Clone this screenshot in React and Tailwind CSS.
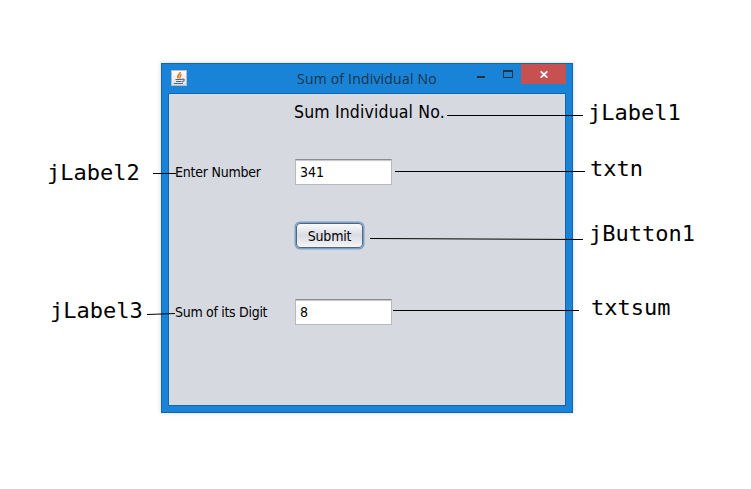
import React from "react";

const noteFont = "font-['DejaVu_Sans_Mono',monospace] text-[22px] leading-[26px] whitespace-pre text-black";
const uiFont = "font-['DejaVu_Sans_Condensed','DejaVu_Sans',sans-serif] [font-stretch:condensed] text-black whitespace-nowrap";

function JavaIcon() {
  return (
    <svg width="16" height="16" viewBox="0 0 16 16" className="block">
      <defs>
        <linearGradient id="tile" x1="0" y1="0" x2="0" y2="1">
          <stop offset="0" stopColor="#fff" />
          <stop offset="1" stopColor="#dedede" />
        </linearGradient>
      </defs>
      <rect x="0.5" y="0.5" width="15" height="15" fill="url(#tile)" stroke="#b9bcc0" />
      <path d="M9.2 2C9.4 4 5.2 5.2 7.2 8.4M10.6 4.5C8 5.6 9.9 6.9 8.6 8.4" fill="none" stroke="#e8731c" strokeWidth="1.5" />
      <path d="M4.5 9.5h6.5M5 11.5h5.5M3 13.5h9M11 9.3c3.2-.8 2.8 2 0 2.4" fill="none" stroke="#456b8a" strokeWidth="1.1" />
    </svg>
  );
}

function Field({ value }) {
  return (
    <div className={`${uiFont} flex h-[26px] w-[97px] items-center border border-t-[#8b8c90] border-x-[#b8b9bd] border-b-[#b8b9bd] bg-white pl-1 text-sm shadow-[inset_0_2px_1px_-1px_#c4c5c8]`}>
      {value}
    </div>
  );
}

function TitleBar() {
  return (
    <div className="flex h-[29px] items-start">
      <div className="ml-[9px] mt-1.5"><JavaIcon /></div>
      <div className="ml-[110px] mt-[5px] w-[142px] whitespace-nowrap font-['Open_Sans',sans-serif] text-[14px] leading-5 tracking-[0.2px] text-[#1d3345]">Sum of Individual No</div>
      <div className="ml-[38px] mt-3 h-0.5 w-2 bg-[#26303b]" />
      <div className="ml-[18px] mt-1.5 h-2 w-2.5 border border-t-2 border-[#26303b]" />
      <div className="ml-2 flex h-5 w-[45px] items-center justify-center bg-[#c75050]">
        <svg width="8" height="7" viewBox="0 0 8 7"><path d="M.7.3l6.6 6.4M7.3.3L.7 6.7" stroke="white" strokeWidth="1.7" /></svg>
      </div>
    </div>
  );
}

function Window() {
  return (
    <div className="mt-[63px] flex h-[350px] w-[412px] flex-col border border-[#1065ac] bg-[#1883d7] px-1.5 pb-1.5 shadow-[0_0_4px_#00000030]">
      <div className="-mx-1.5"><TitleBar /></div>
      <div className="h-[313px] border border-[#1065ac] bg-[#d6d9e0] pl-1.5">
        <div className={`${uiFont} ml-[119px] mt-2 text-[17.5px] leading-5 tracking-[0.15px]`}>Sum Individual No.</div>
        <div className="mt-[37px] flex h-[26px] items-center">
          <div className={`${uiFont} w-[120px] text-sm tracking-[-0.22px]`}>Enter Number</div>
          <Field value="341" />
        </div>
        <div className="ml-[121px] mt-[38px] flex">
          <button className={`${uiFont} h-[25px] w-[67px] rounded-[4px] border border-[#5c6470] bg-linear-to-b from-[#fafafb] via-[#d9dce3] to-[#f4f5f8] text-sm tracking-[-0.2px] shadow-[0_0_0_1.5px_#73a4d1]`}>Submit</button>
        </div>
        <div className="mt-[51px] flex h-[26px] items-center">
          <div className={`${uiFont} w-[120px] text-sm tracking-[-0.3px]`}>Sum of its Digit</div>
          <Field value="8" />
        </div>
      </div>
    </div>
  );
}

export default function App() {
  return (
    <div className="relative flex h-[489px] w-[751px] overflow-hidden bg-white">
      <div className="w-[161px] shrink-0 pt-40">
        <div className={`${noteFont} ml-[47px]`}>jLabel2</div>
        <div className={`${noteFont} ml-[50px] mt-[112px]`}>jLabel3</div>
      </div>
      <Window />
      <div className="pt-[100px]">
        <div className={`${noteFont} ml-[15px]`}>jLabel1</div>
        <div className={`${noteFont} ml-[17px] mt-[30px]`}>txtn</div>
        <div className={`${noteFont} ml-4 mt-[39px]`}>jButton1</div>
        <div className={`${noteFont} ml-[18px] mt-12`}>txtsum</div>
      </div>
      <svg className="pointer-events-none absolute inset-0" width="751" height="489" fill="none" stroke="black">
        <path d="M447 115.5H583M395 171.5H585M393 310.5H579M153 173.5H176M147 314.5L175 313.5M370 238.5L583 239.5" />
      </svg>
    </div>
  );
}
